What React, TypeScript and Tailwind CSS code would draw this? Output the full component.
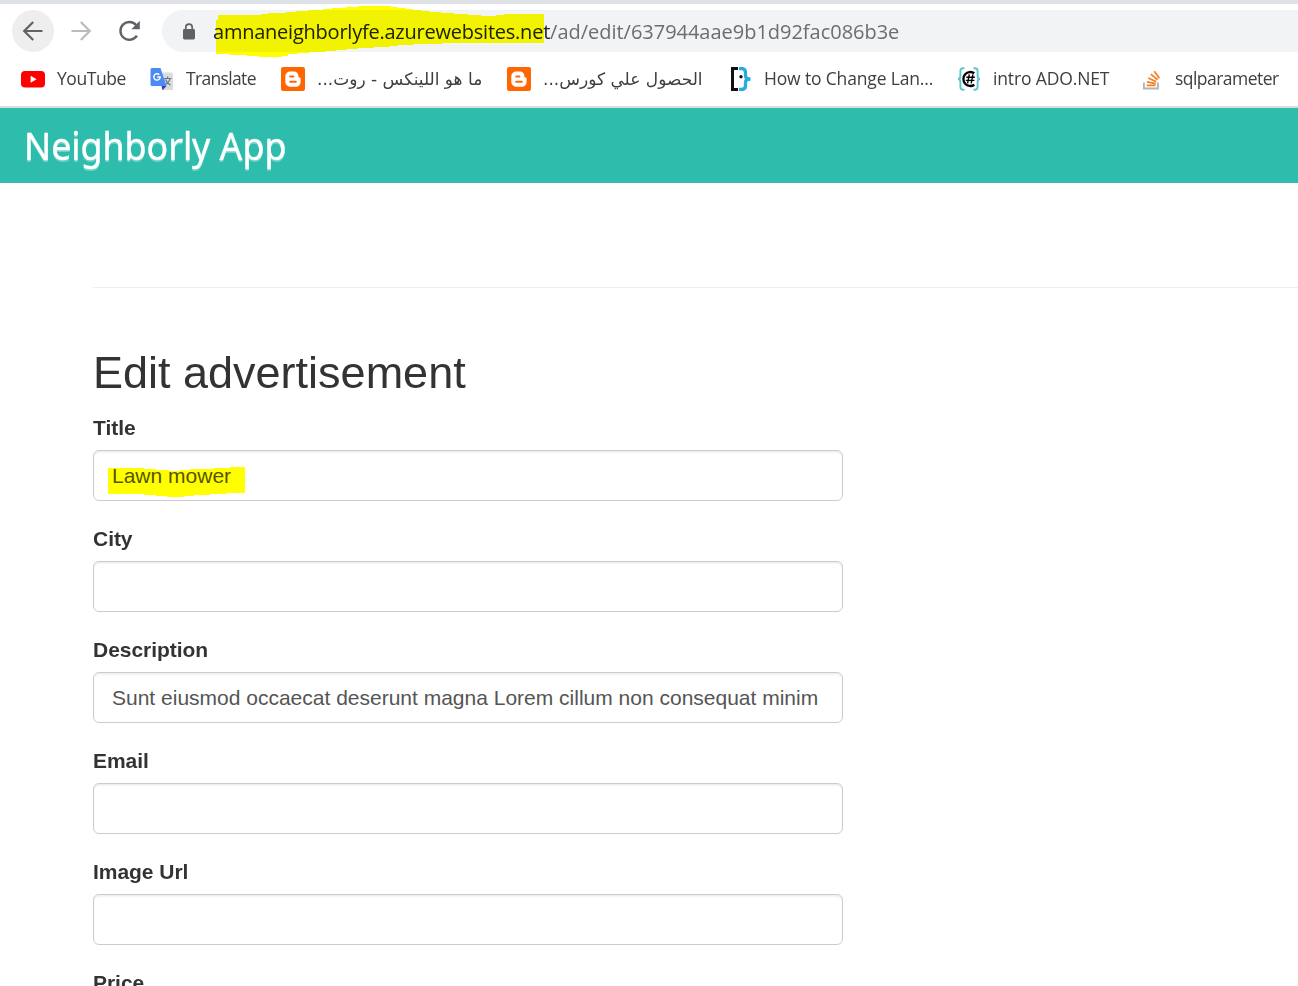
import { type ReactNode } from "react";

function BackArrow({ flip = false, color }: { flip?: boolean; color: string }) {
  return (
    <svg width="22" height="22" viewBox="0 0 22 22" className={flip ? "-scale-x-100" : ""} fill="none" stroke={color} strokeWidth="2.2">
      <path d="M20.5 11H2.5M11.2 1.9L2.2 11l9 9.1" />
    </svg>
  );
}

function Reload() {
  return (
    <svg width="24" height="24" viewBox="0 0 24 24">
      <path d="M18.9 16.6A8.9 8.9 0 1 1 18.2 6.2" fill="none" stroke="#5f6368" strokeWidth="2.4" />
      <path d="M21.8 1.8v8.4h-8.4z" fill="#5f6368" />
    </svg>
  );
}

function Lock() {
  return (
    <svg width="14" height="17" viewBox="0 0 14 17">
      <rect x="1" y="6" width="12" height="10.5" rx="1.4" fill="#5f6368" />
      <path d="M3.8 6.500V4.300a3.200 3.200 0 0 1 6.400 0V6.500" fill="none" stroke="#5f6368" strokeWidth="1.7" />
    </svg>
  );
}

function YouTube() {
  return (
    <svg width="24" height="24" viewBox="0 0 24 24">
      <rect x="0" y="4" width="24" height="16.500" rx="4" fill="#f00" />
      <path d="M9.600 8.800v7l6-3.500z" fill="#fff" />
    </svg>
  );
}

function Translate() {
  return (
    <svg width="24" height="24" viewBox="0 0 24 24">
      <path d="M10 5.500h11.500a1.500 1.500 0 0 1 1.500 1.500v14.500a1.500 1.500 0 0 1-1.500 1.500H13z" fill="#dcdcdc" />
      <path d="M14 11.500h7.500M17.600 9.500v2M20 11.500c-.6 3-2.600 5-5 6.500M15.500 12.500c1 2.600 2.800 4.300 5 5.700" fill="none" stroke="#607988" strokeWidth="1.200" />
      <path d="M11.500 19h5l-4 4.200z" fill="#2a3fb8" />
      <path d="M2 1h8.500l6 18H2a1.500 1.500 0 0 1-1.500-1.500v-15A1.500 1.500 0 0 1 2 1z" fill="#4c8bf5" />
      <path d="M9.300 7.700A3.200 3.200 0 1 0 10.200 10H7.200" fill="none" stroke="#fff" strokeWidth="1.400" />
    </svg>
  );
}

function Blogger() {
  return (
    <svg width="24" height="24" viewBox="0 0 24 24">
      <rect width="24" height="24" rx="2.200" fill="#f60" />
      <path d="M9 4.500h4a4.500 4.500 0 0 1 4.400 4.500c0 1 .4 1.500 1.200 1.500.7 0 1 .4 1 1.200V15a4.800 4.800 0 0 1-4.800 4.800H9A4.800 4.800 0 0 1 4.300 15V9.200A4.700 4.700 0 0 1 9 4.500z" fill="#fff" />
      <path d="M9.200 9.400h3.200M9.200 14.700h5.600" stroke="#f60" strokeWidth="2" strokeLinecap="round" />
    </svg>
  );
}

function BracketFace() {
  return (
    <svg width="24" height="24" viewBox="0 0 24 24" fill="none">
      <path d="M10 1.500H4.500v21H10" stroke="#111" strokeWidth="3" />
      <path d="M11 1.500h2.500c3 0 4 1.500 4 4v3.200c0 2 1 3.300 5 3.300-4 0-5 1.300-5 3.300v3.200c0 2.500-1 4-4 4H11" stroke="#29abe2" strokeWidth="3.300" />
      <circle cx="13" cy="9.800" r="1.700" fill="#111" />
    </svg>
  );
}

function SharpBraces() {
  return (
    <svg width="24" height="24" viewBox="0 0 24 24" fill="none">
      <path d="M7.500 1.300H6c-2 0-2.600.8-2.600 2.600v5c0 2-.6 3.100-2.400 3.100 1.800 0 2.400 1.100 2.400 3.100v5c0 1.800.6 2.600 2.600 2.600h1.500M16.500 1.300H18c2 0 2.600.8 2.600 2.600v5c0 2 .6 3.100 2.400 3.100-1.800 0-2.400 1.100-2.400 3.100v5c0 1.800-.6 2.600-2.600 2.600h-1.500" stroke="#5cc5cd" strokeWidth="1.900" />
      <path d="M17.300 6.300A6.900 7 0 1 0 17.300 17.700" stroke="#000" strokeWidth="2.300" />
      <path d="M12.300 7.300l-1.700 9M15.900 7.300l-1.700 9M9.300 10.200h8.600M8.800 13.400h8.600" stroke="#000" strokeWidth="1.400" />
    </svg>
  );
}

function StackOverflow() {
  return (
    <svg width="24" height="24" viewBox="0 0 24 24" fill="none">
      <path d="M4.900 15.500v6h14v-6" stroke="#b0b5b9" strokeWidth="1.900" />
      <path d="M7.700 18.400h8.800M8 14.800l8.700 1.800M9.300 11l8 3.800M11.800 7.100l6.800 5.700M15.300 4.200l5 7.100" stroke="#f48024" strokeWidth="1.800" />
    </svg>
  );
}

function Bookmark({ icon, label, className, textClass = "", rtl }: { icon: ReactNode; label: string; className: string; textClass?: string; rtl?: boolean }) {
  return (
    <div className={`flex shrink-0 items-center gap-3 ${className}`}>
      {icon}
      <span dir={rtl ? "rtl" : "ltr"} className={`whitespace-nowrap ${rtl ? "pt-[2px] font-['DejaVu_Sans',sans-serif] text-[17px]" : "pb-px font-['Open_Sans','Noto_Sans',sans-serif] text-[17.5px]"} ${textClass}`}>{label}</span>
    </div>
  );
}

function Field({ label, value, marked }: { label: string; value: string; marked?: boolean }) {
  return (
    <div className="h-[111px]">
      <label className="block h-[37px] leading-[30px] font-bold tracking-[-0.04px]">{label}</label>
      <div className="relative flex h-[51px] w-[750px] items-center rounded-[6px] border border-[#ccc] bg-white px-[18px] text-[#555] shadow-[inset_0_1.5px_1.5px_rgba(0,0,0,0.075)]">
        <span className="whitespace-nowrap">{value}</span>
        {marked && (
          <svg className="absolute top-[16px] left-[14px] mix-blend-multiply" width="138" height="31" viewBox="0 0 138 31">
            <path d="M0 1H36V2H48V3H61V4H72V3H82V2H105V1H122V0H137V26H119V27H102V28H86V29H76V30H59V29H48V28H36V27H0z" fill="#ff0" />
          </svg>
        )}
      </div>
    </div>
  );
}

export default function App() {
  return (
    <div className="h-[986px] w-[1298px] overflow-hidden bg-white">
      <div className="h-1 bg-[#dee1e6]" />
      <div className="flex h-[54px] items-center pl-3">
        <div className="flex size-[42px] items-center justify-center rounded-full bg-[#eee]"><BackArrow color="#5f6368" /></div>
        <div className="ml-[16px] flex w-[22px]"><BackArrow flip color="#babcbe" /></div>
        <div className="ml-[26px]"><Reload /></div>
        <div className="relative ml-[20px] flex h-[42px] flex-1 items-center rounded-l-full bg-[#f1f3f4] pl-5">
          <Lock />
          <span className="ml-[17px] pt-[2px] whitespace-nowrap font-['Open_Sans','Noto_Sans',sans-serif] text-[20px] text-[#6a6e72]">
            <span className="tracking-[-0.23px] text-[#202124]">amnaneighborlyfe.azurewebsites.net</span><span className="tracking-[-0.02px]">/ad/edit/637944aae9b1d92fac086b3e</span>
          </span>
          <svg className="absolute -top-[4px] left-[54px] mix-blend-multiply" width="330" height="52" viewBox="0 0 330 52">
            <path d="M2 9H45V8H52V7H70V6H80V5H92V4H107V3H116V2H130V1H142V0H175V1H182V2H190V3H197V4H205V5H214V6H225V7H238V8H252V9H265V10H280V9H288V8H328V37H226V38H198V39H182V40H174V41H158V42H142V43H130V44H120V45H110V46H94V47H82V48H72V50H66V51H43V50H31V49H14V48H0V14H2z" fill="#ff0" />
          </svg>
        </div>
      </div>
      <div className="flex h-[48px] items-center pb-[6px] pl-[21px] text-[#3c4043]">
        <Bookmark icon={<YouTube />} label="YouTube" className="w-[129px]" textClass="tracking-[-0.42px]" />
        <Bookmark icon={<Translate />} label="Translate" className="w-[131px]" textClass="tracking-[-0.66px]" />
        <Bookmark icon={<Blogger />} label="ما هو اللينكس - روت..." className="w-[226px]" rtl />
        <Bookmark icon={<Blogger />} label="الحصول علي كورس..." className="w-[221px]" rtl />
        <Bookmark icon={<BracketFace />} label="How to Change Lan..." className="w-[229px]" textClass="tracking-[-0.16px]" />
        <Bookmark icon={<SharpBraces />} label="intro ADO.NET" className="w-[182px]" textClass="tracking-[-0.14px]" />
        <Bookmark icon={<StackOverflow />} label="sqlparameter" className="w-[150px]" textClass="tracking-[-0.53px]" />
      </div>
      <div className="h-[2px] bg-[#dadce0]" />
      <header className="flex h-[75px] items-center bg-[#2ebdac] pl-[24px]">
        <span className="origin-left scale-x-[0.94] whitespace-nowrap font-['Noto_Sans',sans-serif] text-[38px] text-white [-webkit-text-stroke:0.4px_white] [text-shadow:0_2px_0_rgba(255,255,255,0.3)]">Neighborly App</span>
      </header>
      <main className="pt-[104px] pl-[93px] font-['Liberation_Sans',Arial,sans-serif] text-[21px] text-[#333]">
        <hr className="border-t border-[#eee]" />
        <h2 className="mt-[60px] h-[65px] text-[45px] leading-[50px]">Edit advertisement</h2>
        <Field label="Title" value="Lawn mower" marked />
        <Field label="City" value="" />
        <Field label="Description" value="Sunt eiusmod occaecat deserunt magna Lorem cillum non consequat minim" />
        <Field label="Email" value="" />
        <Field label="Image Url" value="" />
        <Field label="Price" value="" />
      </main>
    </div>
  );
}
